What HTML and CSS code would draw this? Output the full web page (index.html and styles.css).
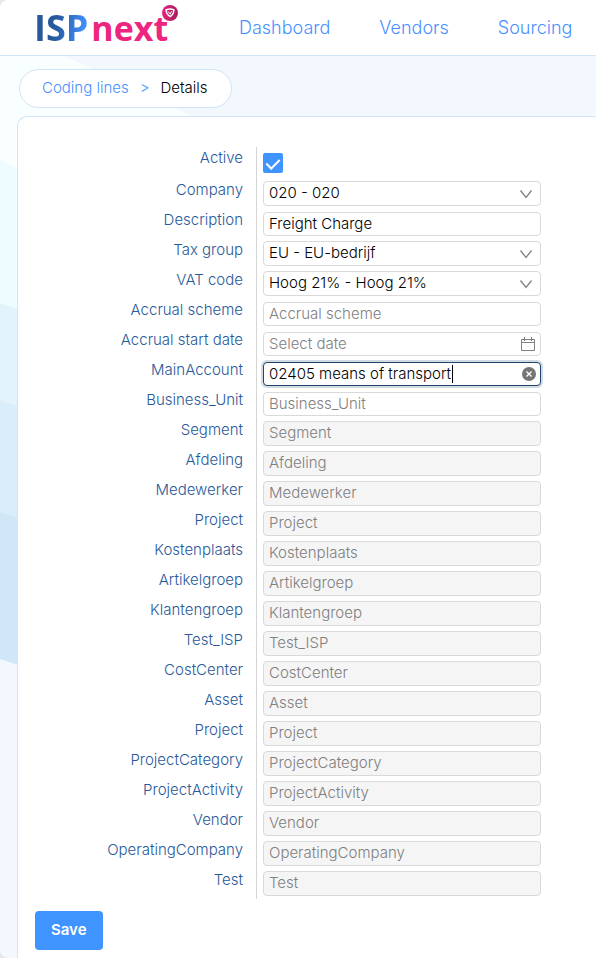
FILE: index.html
```html
<!DOCTYPE html>
<html lang="en">
<head>
<meta charset="utf-8">
<meta name="viewport" content="width=device-width, initial-scale=1">
<title>Coding lines - Details</title>
<link rel="stylesheet" href="styles.css">
</head>
<body>
<div class="app">
  <header class="topbar">
    <a class="logo" href="#" aria-label="ISPnext">
      <span class="logo-isp">ISP</span><span class="logo-next">next</span>
      <svg class="logo-badge" viewBox="0 0 16 16" aria-hidden="true">
        <defs><linearGradient id="badge" x1="0" y1="0" x2="1" y2="0"><stop offset="0" stop-color="#e8237c"/><stop offset="1" stop-color="#a31e5e"/></linearGradient></defs>
        <circle cx="8" cy="8" r="8" fill="url(#badge)"/>
        <path d="M4 4.8Q8 3.2 12 4.8Q11.8 9.2 8.2 11.6Q4.2 9.2 4 4.8Z" fill="none" stroke="#fff" stroke-width="1.4" stroke-linejoin="round"/>
        <path d="M6 6.4L8.2 9.2L9.6 6.2" fill="none" stroke="#fff" stroke-width="1"/>
      </svg>
    </a>
    <nav class="nav">
      <a href="#">Dashboard</a>
      <a href="#">Vendors</a>
      <a href="#">Sourcing</a>
    </nav>
  </header>
  <main class="page">
    <svg class="backdrop" width="200" height="620" viewBox="0 0 200 620" aria-hidden="true">
      <path d="M0 0H65L200 64V620H0Z" fill="#f8fffe"/>
      <path d="M0 103L200 209V620H0Z" fill="#eefbff"/>
      <path d="M0 247L200 318V620H0Z" fill="#e2f3fb"/>
      <path d="M0 345L200 404V620H0Z" fill="#daedfb"/>
      <path d="M0 456L200 527V620H0Z" fill="#d0e7f7"/>
      <path d="M0 603L51 620H0Z" fill="#f3f8ff"/>
    </svg>
    <nav class="crumbs" aria-label="Breadcrumb">
      <a href="#">Coding lines</a>
      <span class="crumb-sep">&gt;</span>
      <span class="crumb-current">Details</span>
    </nav>
    <form class="card">
      <div class="fields">
        <div class="row row-check"><label for="f0">Active</label><div class="cell"><input class="check" type="checkbox" id="f0" checked></div></div>
        <div class="row"><label for="f1">Company</label><div class="cell"><select class="control" id="f1"><option>020 - 020</option></select><svg class="icon" viewBox="0 0 16 16" aria-hidden="true"><path d="M2.5 4.5L8 11.5L13.5 4.5"/></svg></div></div>
        <div class="row"><label for="f2">Description</label><div class="cell"><input class="control" id="f2" value="Freight Charge"></div></div>
        <div class="row"><label for="f3">Tax group</label><div class="cell"><select class="control" id="f3"><option>EU - EU-bedrijf</option></select><svg class="icon" viewBox="0 0 16 16" aria-hidden="true"><path d="M2.5 4.5L8 11.5L13.5 4.5"/></svg></div></div>
        <div class="row"><label for="f4">VAT code</label><div class="cell"><select class="control" id="f4"><option>Hoog 21% - Hoog 21%</option></select><svg class="icon" viewBox="0 0 16 16" aria-hidden="true"><path d="M2.5 4.5L8 11.5L13.5 4.5"/></svg></div></div>
        <div class="row"><label for="f5">Accrual scheme</label><div class="cell"><input class="control" id="f5" placeholder="Accrual scheme"></div></div>
        <div class="row"><label for="f6">Accrual start date</label><div class="cell"><input class="control" id="f6" placeholder="Select date"><svg class="icon icon-date" viewBox="0 0 16 16" aria-hidden="true"><path d="M1.5 3.5H14.5V14.5H1.5ZM1.5 6.5H14.5M4.5 1V5M11.5 1V5"/></svg></div></div>
        <div class="row"><label for="f7">MainAccount</label><div class="cell"><input class="control is-active" id="f7" value="02405 means of transport"><span class="caret"></span><button class="clear" type="button" aria-label="Clear"><svg viewBox="0 0 14 14" aria-hidden="true"><circle cx="7" cy="7" r="7" fill="#757575"/><path d="M4.5 4.5L9.5 9.5M9.5 4.5L4.5 9.5" stroke="#fff" stroke-width="1.3"/></svg></button></div></div>
        <div class="row"><label for="f8">Business_Unit</label><div class="cell"><input class="control" id="f8" placeholder="Business_Unit"></div></div>
        <div class="row"><label for="f9">Segment</label><div class="cell"><input class="control" id="f9" placeholder="Segment" disabled></div></div>
        <div class="row"><label for="f10">Afdeling</label><div class="cell"><input class="control" id="f10" placeholder="Afdeling" disabled></div></div>
        <div class="row"><label for="f11">Medewerker</label><div class="cell"><input class="control" id="f11" placeholder="Medewerker" disabled></div></div>
        <div class="row"><label for="f12">Project</label><div class="cell"><input class="control" id="f12" placeholder="Project" disabled></div></div>
        <div class="row"><label for="f13">Kostenplaats</label><div class="cell"><input class="control" id="f13" placeholder="Kostenplaats" disabled></div></div>
        <div class="row"><label for="f14">Artikelgroep</label><div class="cell"><input class="control" id="f14" placeholder="Artikelgroep" disabled></div></div>
        <div class="row"><label for="f15">Klantengroep</label><div class="cell"><input class="control" id="f15" placeholder="Klantengroep" disabled></div></div>
        <div class="row"><label for="f16">Test_ISP</label><div class="cell"><input class="control" id="f16" placeholder="Test_ISP" disabled></div></div>
        <div class="row"><label for="f17">CostCenter</label><div class="cell"><input class="control" id="f17" placeholder="CostCenter" disabled></div></div>
        <div class="row"><label for="f18">Asset</label><div class="cell"><input class="control" id="f18" placeholder="Asset" disabled></div></div>
        <div class="row"><label for="f19">Project</label><div class="cell"><input class="control" id="f19" placeholder="Project" disabled></div></div>
        <div class="row"><label for="f20">ProjectCategory</label><div class="cell"><input class="control" id="f20" placeholder="ProjectCategory" disabled></div></div>
        <div class="row"><label for="f21">ProjectActivity</label><div class="cell"><input class="control" id="f21" placeholder="ProjectActivity" disabled></div></div>
        <div class="row"><label for="f22">Vendor</label><div class="cell"><input class="control" id="f22" placeholder="Vendor" disabled></div></div>
        <div class="row"><label for="f23">OperatingCompany</label><div class="cell"><input class="control" id="f23" placeholder="OperatingCompany" disabled></div></div>
        <div class="row"><label for="f24">Test</label><div class="cell"><input class="control" id="f24" placeholder="Test" disabled></div></div>
      </div>
      <button class="save" type="button">Save</button>
    </form>
  </main>
</div>
</body>
</html>
```
FILE: styles.css
```css
* { box-sizing: border-box; }

html { background: #e6e6e6; }

body {
  margin: 0;
  font: 300 15px/22px Inter, sans-serif;
  color: #000;
}

a { color: #4791ff; text-decoration: none; }

.app {
  min-height: 100vh;
  display: flex;
  flex-direction: column;
  overflow: hidden;
  border-radius: 8px 0 0 8px;
  background: #f3f8ff;
}

.topbar {
  display: flex;
  align-items: center;
  height: 56px;
  padding-left: 34px;
  background: #fff;
  border-bottom: 1px solid #d0e5f5;
}

.logo {
  position: relative;
  flex: none;
  display: flex;
  align-items: baseline;
  gap: 3px;
  width: 145px;
  font: 700 36px/56px "Open Sans", sans-serif;
}

.logo-isp {
  color: transparent;
  background: linear-gradient(100deg, #28599b 40%, #4093ff 90%);
  background-clip: text;
  -webkit-background-clip: text;
}

.logo-next { color: #ee2580; font-size: 34px; }

.logo-badge {
  position: absolute;
  top: 5px;
  right: 1px;
  width: 16px;
  height: 16px;
}

.nav {
  display: flex;
  gap: 49px;
  margin-left: 60px;
  font-size: 18px;
}

.page {
  position: relative;
  z-index: 0;
  flex: 1;
  display: flex;
  flex-direction: column;
  align-items: flex-start;
  padding: 13px 0 0 17px;
}

.backdrop {
  position: absolute;
  z-index: -1;
  top: 0;
  left: 0;
}

.crumbs {
  display: flex;
  gap: 11px;
  margin-left: 2px;
  padding: 7px 23px 8px 22px;
  border: 1px solid #d0e5f5;
  border-radius: 20px;
  background: #fff;
}

.crumb-sep { color: #4791ff; }

.card {
  flex: 1;
  align-self: stretch;
  margin-top: 8px;
  padding: 30px 17px 8px;
  border: 1px solid #d0e5f5;
  border-width: 1px 0 0 1px;
  border-radius: 10px 0 0 0;
  background: #fff;
}

.row {
  display: grid;
  grid-template-columns: 221px minmax(0, 285px);
  height: 30px;
}

.row-check { height: 32px; }

.row label {
  padding-right: 13px;
  text-align: right;
  color: #28599b;
}

.cell {
  position: relative;
  padding: 3px 0 0 6px;
  border-left: 1px solid #d5d5d5;
}

.check {
  appearance: none;
  display: block;
  width: 20px;
  height: 20px;
  margin: 3px 0 0;
  border-radius: 2px;
  background: #3f94ff;
}

.check::before {
  content: "";
  display: block;
  width: 6px;
  height: 11px;
  margin: 0 auto;
  border: solid #fff;
  border-width: 0 2px 2px 0;
  transform: translateY(3px) rotate(45deg);
}

.control {
  appearance: none;
  display: block;
  width: 100%;
  height: 24px;
  margin: 0;
  padding: 0 5px 1px;
  border: 1px solid #d9d9d9;
  border-radius: 4px;
  background: #fff;
  color: #000;
  font: inherit;
  outline: none;
}

.control::placeholder { color: #808080; opacity: 1; }

select.control,
.control:disabled {
  height: 25px;
  margin-top: -1px;
  padding-bottom: 2px;
}

.control:disabled { background: #f5f5f5; }

.control.is-active {
  border-color: #1f456e;
  box-shadow: 0 0 0 2px #d2dae2;
}

.icon {
  position: absolute;
  top: 7px;
  right: 7px;
  width: 16px;
  height: 16px;
  fill: none;
  stroke: #808080;
  stroke-width: 1.3;
  pointer-events: none;
}

.icon-date { right: 5px; stroke-width: 1; }

.caret {
  position: absolute;
  top: 6px;
  left: 195px;
  width: 1px;
  height: 18px;
  background: #000;
}

.clear {
  position: absolute;
  top: 8px;
  right: 5px;
  width: 14px;
  height: 14px;
  padding: 0;
  border: 0;
  background: none;
}

.clear svg { display: block; }

.save {
  margin-top: 12px;
  padding: 8px 16px 9px;
  border: 0;
  border-radius: 4px;
  background: #3f94ff;
  color: #fff;
  font: 600 15px/22px Inter, sans-serif;
}
```
